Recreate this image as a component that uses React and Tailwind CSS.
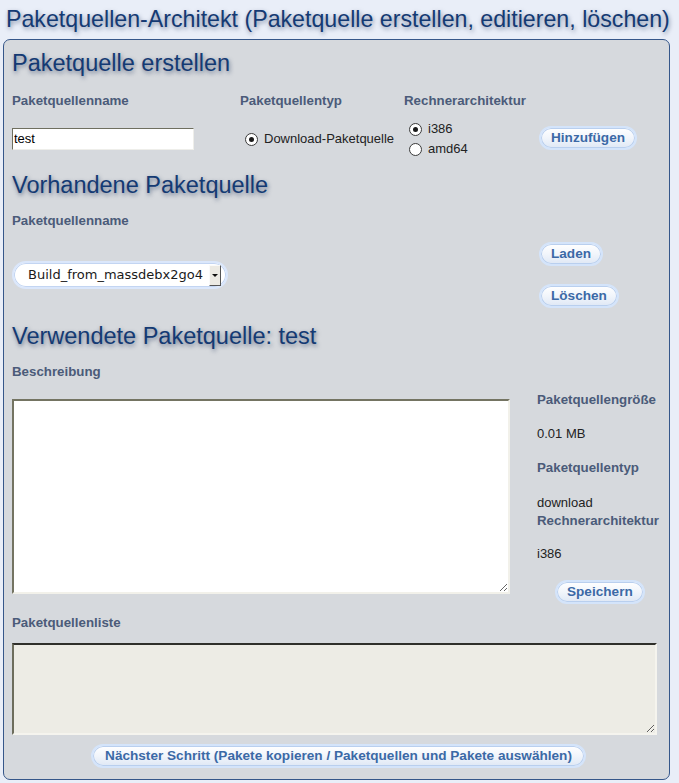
import React from 'react'

const FONT = { fontFamily: '"Liberation Sans", Arial, sans-serif' }

function Heading({ children, className = '' }) {
  return (
    <h2
      className={`text-[23.5px] leading-[28px] text-[#143a73] [text-shadow:1px_2px_4px_rgba(20,40,80,0.55)] ${className}`}
    >
      {children}
    </h2>
  )
}

function Label({ children, className = '' }) {
  return <div className={`text-[13.3px] font-bold leading-[16px] text-[#4b5b79] ${className}`}>{children}</div>
}

function PillButton({ children, className = '' }) {
  return (
    <button
      className={`h-[24px] rounded-full border-2 border-[#d4e4fa] bg-gradient-to-b from-[#ffffff] via-[#f1f5fb] to-[#dfe8f5] px-[10px] text-[13.6px] font-bold leading-[18px] text-[#3b69a6] shadow-[inset_0_0_0_1px_#b9cfee] ${className}`}
    >
      {children}
    </button>
  )
}

function Radio({ checked }) {
  return (
    <span className="inline-flex h-[13px] w-[13px] items-center justify-center rounded-full border border-[#3a3a3a] bg-white">
      {checked && <span className="h-[5px] w-[5px] rounded-full bg-[#1a1a1a]" />}
    </span>
  )
}

export default function App() {
  return (
    <div className="min-h-[783px] w-[679px] bg-[#e9eef8] px-[3px] pt-[2px]" style={FONT}>
      <h1 className="pl-[3px] text-[23.2px] leading-[34px] text-[#143a73] [text-shadow:1px_2px_4px_rgba(20,40,80,0.5)]">
        Paketquellen-Architekt (Paketquelle erstellen, editieren, löschen)
      </h1>

      <div className="mt-[3px] h-[741px] w-[667px] rounded-[7px] border border-[#36578a] bg-[#d6d9dd] px-[8px] pt-[9px]">
        <Heading>Paketquelle erstellen</Heading>

        <div className="mt-[16px] grid grid-cols-[228px_164px_135px_1fr]">
          <Label>Paketquellenname</Label>
          <Label>Paketquellentyp</Label>
          <Label>Rechnerarchitektur</Label>
          <div />

          <div className="pt-[17px]">
            <input
              readOnly
              value="test"
              className="h-[22px] w-[182px] border border-t-[#6f6f5f] border-l-[#6f6f5f] border-r-[#eeeeea] border-b-[#eeeeea] bg-white px-[1px] text-[13px] text-black outline-none"
              style={FONT}
            />
          </div>
          <div className="pl-[5px] pt-[19px] text-[13px] text-[#222]">
            <div className="flex h-[22px] items-center gap-[6px]">
              <Radio checked />
              <span>Download-Paketquelle</span>
            </div>
          </div>
          <div className="flex flex-col pl-[5px] pt-[10px] text-[13px] leading-[20px] text-[#222]">
            <div className="flex items-center gap-[6px]">
              <Radio checked />
              <span>i386</span>
            </div>
            <div className="flex items-center gap-[6px]">
              <Radio />
              <span>amd64</span>
            </div>
          </div>
          <div className="pt-[16px]">
            <PillButton>Hinzufügen</PillButton>
          </div>
        </div>

        <Heading className="mt-[12px]">Vorhandene Paketquelle</Heading>

        <div className="mt-[14px] flex">
          <div className="w-[527px]">
            <Label>Paketquellenname</Label>
            <div className="mt-[32px] flex h-[28px] w-[216px] items-center rounded-full border-2 border-[#dbe7fb] bg-white pl-[14px] pr-[5px] shadow-[inset_0_0_0_1px_#c3d5f2]">
              <span
                className="flex-1 text-[13px] text-[#1a1a1a]"
                style={{ fontFamily: '"DejaVu Sans", sans-serif' }}
              >
                Build_from_massdebx2go4
              </span>
              <span className="flex h-[21px] w-[12px] items-center justify-center border border-t-[#fafafa] border-l-[#fafafa] border-r-[#555] border-b-[#555] bg-[#eceae4]">
                <span className="h-0 w-0 border-x-[3px] border-t-[3px] border-x-transparent border-t-[#111]" />
              </span>
            </div>
          </div>
          <div className="flex flex-col items-start gap-[18px] pt-[29px]">
            <PillButton>Laden</PillButton>
            <PillButton>Löschen</PillButton>
          </div>
        </div>

        <Heading className="mt-[14px]">Verwendete Paketquelle: test</Heading>

        <Label className="mt-[14px]">Beschreibung</Label>

        <div className="mt-[19px] flex">
          <textarea
            readOnly
            className="h-[195px] w-[498px] resize border-2 border-t-[#747462] border-l-[#747462] border-r-[#f2f1ea] border-b-[#f2f1ea] bg-white outline-none"
          />
          <div className="ml-[27px] flex flex-col text-[13px] text-[#222]">
            <Label className="mt-[-7px]">Paketquellengröße</Label>
            <div className="mt-[18px] leading-[16px]">0.01 MB</div>
            <Label className="mt-[18px]">Paketquellentyp</Label>
            <div className="mt-[19px] leading-[16px]">download</div>
            <Label className="mt-[2px]">Rechnerarchitektur</Label>
            <div className="mt-[17px] leading-[16px]">i386</div>
            <PillButton className="ml-[18px] mt-[18px] self-start">Speichern</PillButton>
          </div>
        </div>

        <Label className="mt-[11px]">Paketquellenliste</Label>

        <textarea
          readOnly
          className="mt-[12px] block h-[92px] w-[645px] resize border-2 border-t-[#2f2f2a] border-l-[#6d6d5c] border-r-[#f5f4ee] border-b-[#f5f4ee] bg-[#edece5] outline-none"
        />

        <div className="mt-[9px] flex justify-center pl-[4px]">
          <PillButton className="px-[12px] text-[13.3px]">
            Nächster Schritt (Pakete kopieren / Paketquellen und Pakete auswählen)
          </PillButton>
        </div>
      </div>
    </div>
  )
}
